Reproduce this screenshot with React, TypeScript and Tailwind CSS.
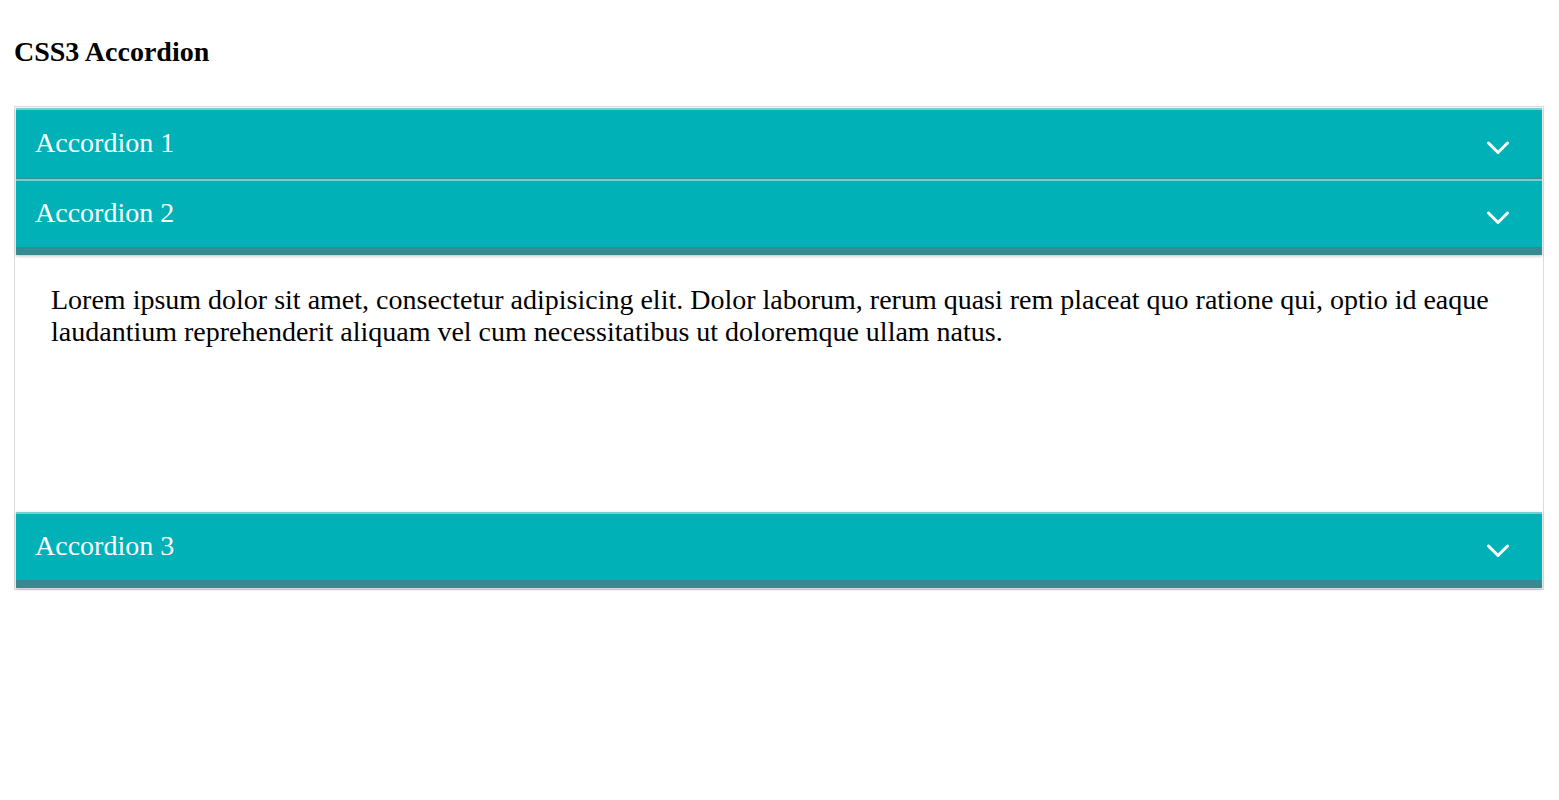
import { useState } from 'react';

const items = [
  { id: 1, title: 'Accordion 1' },
  { id: 2, title: 'Accordion 2' },
  { id: 3, title: 'Accordion 3' },
];

const lorem =
  'Lorem ipsum dolor sit amet, consectetur adipisicing elit. Dolor laborum, rerum quasi rem placeat quo ratione qui, optio id eaque laudantium reprehenderit aliquam vel cum necessitatibus ut doloremque ullam natus.';

function Chevron() {
  return (
    <svg width="24" height="14" viewBox="0 0 24 14" className="mt-[8px]">
      <path d="M2.5 2 L12 11.5 L21.5 2" fill="none" stroke="#fff" strokeWidth="3" strokeLinecap="round" strokeLinejoin="round" />
    </svg>
  );
}

export default function App() {
  const [open, setOpen] = useState(2);

  return (
    <div className="min-h-screen bg-white pl-[14px] pr-[15px] pt-[36px] font-['Liberation_Serif',serif]">
      <h2 className="text-[28px] font-bold leading-[32px] text-black">CSS3 Accordion</h2>

      <div className="mt-[38px] w-[1530px] border border-[#dcdcdc] p-px">
        {items.map((item, i) => {
          const isOpen = open === item.id;
          const last = i === items.length - 1;
          return (
            <div key={item.id}>
              <button
                onClick={() => setOpen(isOpen ? 0 : item.id)}
                className={`flex w-full items-center justify-between border-t-2 border-[#74cfd2] bg-[#00b2b7] pl-[19px] pr-[32px] text-left shadow-[0_1px_3px_rgba(0,0,0,0.25)]
                  ${isOpen || last ? 'h-[76px] border-b-8 border-b-[#378a91]' : 'h-[71px] border-b-2 border-b-[#3b979c]'}`}
              >
                <span className="mt-[-2px] text-[28px] leading-[32px] text-white">{item.title}</span>
                <Chevron />
              </button>
              {isOpen && (
                <div className="h-[257px] px-[35px] pt-[29px] text-[28px] leading-[32px] text-black">
                  {lorem}
                </div>
              )}
            </div>
          );
        })}
      </div>
    </div>
  );
}
